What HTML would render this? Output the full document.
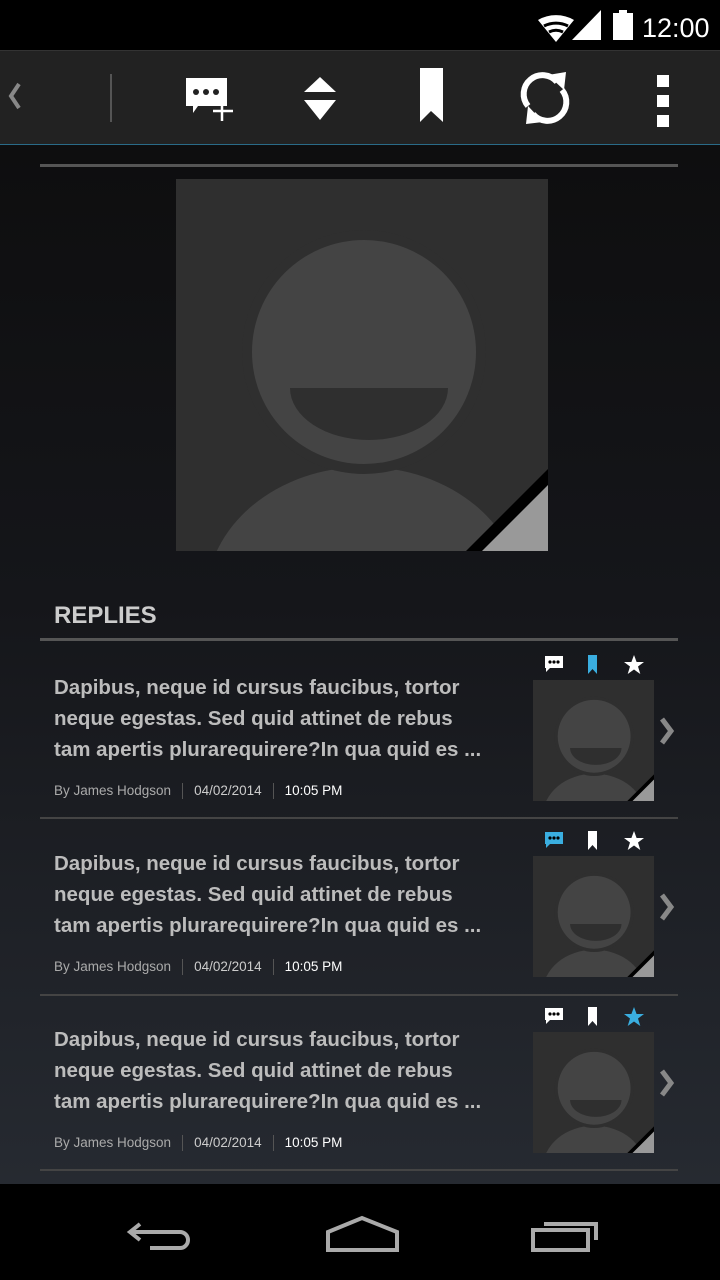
<!DOCTYPE html>
<html><head><meta charset="utf-8"><style>
*{margin:0;padding:0;box-sizing:border-box}
body{width:720px;height:1280px;overflow:hidden;font-family:"Liberation Sans",sans-serif;background:linear-gradient(#0e0e0f 150px,#15161a 600px,#262a31 1184px);position:relative}
.abs{position:absolute}
.status{left:0;top:0;width:720px;height:50px;background:#000}
.bar{left:0;top:50px;width:720px;height:95px;background:#222;border-top:1px solid #333;border-bottom:1px solid #2a6b88}
.nav{left:0;top:1184px;width:720px;height:96px;background:#000}
.txt{left:54px;color:#bcbcbc;font-size:20.5px;line-height:31px;font-weight:bold;letter-spacing:0}
.meta{left:54px;font-size:13.5px;color:#aaa}
.meta span{display:inline-block}
.sep{width:1px;height:16px;background:#555;vertical-align:middle;margin:0 11px}
.hr{left:40px;width:638px;background:#444;height:2px}
</style></head><body>
<svg width="0" height="0" style="position:absolute"><defs>
<symbol id="av" viewBox="0 0 372 372">
<rect width="372" height="372" fill="#2f2f2f"/>
<ellipse cx="188" cy="420" rx="158" ry="132" fill="#444"/>
<circle cx="188" cy="173" r="122" fill="#2f2f2f"/>
<circle cx="188" cy="173" r="112" fill="#444"/>
<path d="M114 209 H272 A79 52 0 0 1 114 209Z" fill="#2f2f2f"/>
<path d="M290 372 L372 290 V372Z" fill="#000"/>
<path d="M306 372 L372 306 V372Z" fill="#999"/>
</symbol>
<symbol id="bub" viewBox="0 0 20 18"><path d="M1 1H19V13H6L2 17V13H1Z" fill="#fff"/><circle cx="6" cy="7" r="1.6" fill="#000"/><circle cx="10" cy="7" r="1.6" fill="#000"/><circle cx="14" cy="7" r="1.6" fill="#000"/></symbol>
</defs></svg>
<div class="abs status"></div>
<svg class="abs" style="left:530px;top:8px" width="190" height="34">
<path d="M8 12 A36 36 0 0 1 44 12 L26 34Z" fill="#fff"/>
<path d="M14 18 A26 26 0 0 1 38 18" stroke="#000" stroke-width="3" fill="none"/>
<path d="M19 24 A16 16 0 0 1 33 24" stroke="#000" stroke-width="3" fill="none"/>
<path d="M42 32 L71 2 V32Z" fill="#fff"/>
<rect x="83" y="5" width="20" height="27" fill="#fff"/><rect x="89" y="2" width="8" height="4" fill="#fff"/>
<text x="112" y="29" fill="#fff" font-size="27" font-family="Liberation Sans">12:00</text>
</svg>
<div class="abs bar"></div>
<svg class="abs" style="left:0;top:50px" width="720" height="95">
<path d="M19 34 L11 46 L19 58" stroke="#888" stroke-width="4" fill="none"/>
<rect x="110" y="24" width="2" height="48" fill="#555"/>
<g transform="translate(186,28)"><path d="M0 0H41V28H12L7 35V28H0Z" fill="#fff"/><circle cx="10" cy="14" r="3" fill="#222"/><circle cx="20" cy="14" r="3" fill="#222"/><circle cx="30" cy="14" r="3" fill="#222"/><path d="M36 23V43M27 33H47" stroke="#fff" stroke-width="2.5"/></g>
<path d="M304 42 L320 27 L336 42Z M304 50 L336 50 L320 70Z" fill="#fff"/>
<path d="M420 18 H443 V72 L431 61 L420 72Z" fill="#fff"/>
<g fill="none" stroke="#fff" stroke-width="6"><path d="M528 56 A18 18 0 0 1 557 32"/><path d="M562 40 A18 18 0 0 1 533 64"/></g>
<path d="M548 25 L566 22 L564 40Z M543 72 L526 74 L528 56Z" fill="#fff"/>
<rect x="657" y="25" width="12" height="12" fill="#fff"/><rect x="657" y="45" width="12" height="12" fill="#fff"/><rect x="657" y="65" width="12" height="12" fill="#fff"/>
</svg>
<div class="abs hr" style="top:164px;height:3px;background:#555"></div>
<svg class="abs" style="left:176px;top:179px" width="372" height="372"><use href="#av"/></svg>
<div class="abs" style="left:54px;top:602px;color:#ccc;font-size:24px;font-weight:bold">REPLIES</div>
<div class="abs hr" style="top:638px;height:3px;background:#555"></div>

<div class="abs nav"></div>
<svg class="abs" style="left:0;top:1184px" width="720" height="96">
<path d="M140 40 L130 48 L140 56 M130 48 H180 A8 8 0 0 1 180 64 H150" stroke="#aaa" stroke-width="4" fill="none"/>
<path d="M328 48 L362 34 L397 48 V66 H328Z" stroke="#aaa" stroke-width="4" fill="none"/>
<rect x="533" y="46" width="55" height="20" stroke="#aaa" stroke-width="4" fill="none"/>
<path d="M544 40 H596 V56" stroke="#aaa" stroke-width="4" fill="none"/>
</svg>

<!-- row 1 -->
<div class="abs txt" style="top:672px">Dapibus, neque id cursus faucibus, tortor<br>neque egestas. Sed quid attinet de rebus<br>tam apertis plurarequirere?In qua quid es ...</div>
<div class="abs meta" style="top:783px"><span>By James Hodgson</span><span class="sep"></span><span style="color:#ccc">04/02/2014</span><span class="sep"></span><span style="color:#fff">10:05 PM</span></div>
<svg class="abs" style="left:544px;top:655px" width="20" height="18"><use href="#bub"/></svg>
<svg class="abs" style="left:587px;top:655px" width="12" height="20"><path d="M1 0H10V19L5.5 14L1 19Z" fill="#3aaee0"/></svg>
<svg class="abs" style="left:623px;top:654px" width="22" height="22"><path d="M11 1L13.6 8H21L15 12.5L17.3 20L11 15.5L4.7 20L7 12.5L1 8H8.4Z" fill="#fff"/></svg>
<svg class="abs" style="left:533px;top:680px" width="121" height="121"><use href="#av"/></svg>
<svg class="abs" style="left:658px;top:717px" width="18" height="30"><path d="M4 2L13 14L4 26" stroke="#888" stroke-width="5" fill="none"/></svg>
<div class="abs hr" style="top:817px"></div>

<!-- row 2 -->
<div class="abs txt" style="top:848px">Dapibus, neque id cursus faucibus, tortor<br>neque egestas. Sed quid attinet de rebus<br>tam apertis plurarequirere?In qua quid es ...</div>
<div class="abs meta" style="top:959px"><span>By James Hodgson</span><span class="sep"></span><span style="color:#ccc">04/02/2014</span><span class="sep"></span><span style="color:#fff">10:05 PM</span></div>
<svg class="abs" style="left:544px;top:831px" width="20" height="18"><path d="M1 1H19V13H6L2 17V13H1Z" fill="#3aaee0"/><circle cx="6" cy="7" r="1.6" fill="#000"/><circle cx="10" cy="7" r="1.6" fill="#000"/><circle cx="14" cy="7" r="1.6" fill="#000"/></svg>
<svg class="abs" style="left:587px;top:831px" width="12" height="20"><path d="M1 0H10V19L5.5 14L1 19Z" fill="#fff"/></svg>
<svg class="abs" style="left:623px;top:830px" width="22" height="22"><path d="M11 1L13.6 8H21L15 12.5L17.3 20L11 15.5L4.7 20L7 12.5L1 8H8.4Z" fill="#fff"/></svg>
<svg class="abs" style="left:533px;top:856px" width="121" height="121"><use href="#av"/></svg>
<svg class="abs" style="left:658px;top:893px" width="18" height="30"><path d="M4 2L13 14L4 26" stroke="#888" stroke-width="5" fill="none"/></svg>
<div class="abs hr" style="top:994px"></div>

<!-- row 3 -->
<div class="abs txt" style="top:1024px">Dapibus, neque id cursus faucibus, tortor<br>neque egestas. Sed quid attinet de rebus<br>tam apertis plurarequirere?In qua quid es ...</div>
<div class="abs meta" style="top:1135px"><span>By James Hodgson</span><span class="sep"></span><span style="color:#ccc">04/02/2014</span><span class="sep"></span><span style="color:#fff">10:05 PM</span></div>
<svg class="abs" style="left:544px;top:1007px" width="20" height="18"><use href="#bub"/></svg>
<svg class="abs" style="left:587px;top:1007px" width="12" height="20"><path d="M1 0H10V19L5.5 14L1 19Z" fill="#fff"/></svg>
<svg class="abs" style="left:623px;top:1006px" width="22" height="22"><path d="M11 1L13.6 8H21L15 12.5L17.3 20L11 15.5L4.7 20L7 12.5L1 8H8.4Z" fill="#3aaee0"/></svg>
<svg class="abs" style="left:533px;top:1032px" width="121" height="121"><use href="#av"/></svg>
<svg class="abs" style="left:658px;top:1069px" width="18" height="30"><path d="M4 2L13 14L4 26" stroke="#888" stroke-width="5" fill="none"/></svg>
<div class="abs hr" style="top:1169px"></div>
</body></html>
